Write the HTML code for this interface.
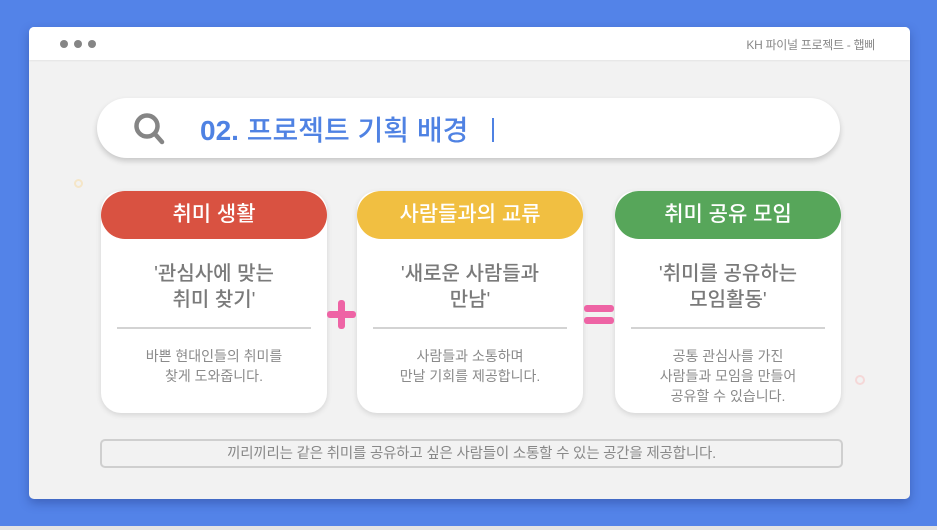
<!DOCTYPE html>
<html><head><meta charset="utf-8"><style>
*{margin:0;padding:0;box-sizing:border-box}
body{width:937px;height:530px;overflow:hidden;background:#5383e8;font-family:"Liberation Sans","Noto Sans CJK KR",sans-serif;position:relative}
.strip{position:absolute;left:0;top:526px;width:937px;height:4px;background:#e4e4e4}
.win{position:absolute;left:29px;top:27px;width:881px;height:472px;background:#f2f2f2;border-radius:5px;overflow:hidden;box-shadow:0 4px 10px rgba(30,50,120,.4)}
.hdr{position:absolute;left:0;top:0;width:100%;height:33px;background:#fff;box-shadow:0 1px 2px rgba(0,0,0,.06)}
.dot{position:absolute;top:13px;width:8px;height:8px;border-radius:50%;background:#858585}
.ht{position:absolute;right:35px;top:9px;font-size:12px;color:#888;letter-spacing:-0.3px}
.search{position:absolute;left:68px;top:71px;width:743px;height:60px;background:#fff;border-radius:30px;box-shadow:0 3px 6px rgba(0,0,0,.18)}
.title{position:absolute;left:103px;top:11px;font-size:28px;font-weight:500;color:#4f82e3;letter-spacing:0px}
.cur{position:absolute;left:395px;top:20px;width:2px;height:24px;background:#4f82e3}
.card{position:absolute;top:164px;width:226px;height:222px;background:#fff;border-radius:20px;box-shadow:0 2px 6px rgba(0,0,0,.12)}
.pill{position:absolute;left:0;top:0;width:100%;height:48px;border-radius:24px;color:#fff;font-size:21px;font-weight:500;text-align:center;line-height:48px}
.big{position:absolute;left:0;top:70px;width:100%;text-align:center;font-size:20px;font-weight:500;color:#7a7a7a;line-height:26px}
.line{position:absolute;left:16px;right:16px;top:136px;height:2px;background:#d3d3d3}
.small{position:absolute;left:0;top:155px;width:100%;text-align:center;font-size:14px;color:#8a8a8a;line-height:20px}
.bottom{position:absolute;left:71px;top:412px;width:743px;height:29px;border:2px solid #cfcfcf;border-radius:5px;text-align:center;font-size:14.5px;color:#888;line-height:26px;letter-spacing:-0.2px}
.pl{position:absolute;background:#ee64a5;border-radius:3px}
</style></head><body>
<div class="strip"></div>
<div class="win">
 <div class="hdr">
  <div class="dot" style="left:31px"></div><div class="dot" style="left:45px"></div><div class="dot" style="left:59px"></div>
  <div class="ht">KH 파이널 프로젝트 - 햅삐</div>
 </div>
 <div style="position:absolute;left:45px;top:152px;width:9px;height:9px;border:2px solid #f5e6c8;border-radius:50%"></div>
 <div style="position:absolute;left:826px;top:348px;width:10px;height:10px;border:2px solid #f5d8d8;border-radius:50%"></div>
 <div class="search">
  <svg style="position:absolute;left:36px;top:14px" width="36" height="36" viewBox="0 0 36 36"><circle cx="14" cy="14" r="10.5" fill="none" stroke="#858585" stroke-width="4.5"/><line x1="22" y1="22" x2="29" y2="30" stroke="#858585" stroke-width="4.5" stroke-linecap="round"/></svg>
  <div class="title"><b>02.</b> 프로젝트 기획 배경</div>
  <div class="cur"></div>
 </div>
 <div class="card" style="left:72px"><div class="pill" style="background:#d95241">취미 생활</div>
  <div class="big">'관심사에 맞는<br>취미 찾기'</div><div class="line"></div>
  <div class="small">바쁜 현대인들의 취미를<br>찾게 도와줍니다.</div></div>
 <div class="card" style="left:328px"><div class="pill" style="background:#f1bf41">사람들과의 교류</div>
  <div class="big">'새로운 사람들과<br>만남'</div><div class="line"></div>
  <div class="small">사람들과 소통하며<br>만날 기회를 제공합니다.</div></div>
 <div class="card" style="left:586px"><div class="pill" style="background:#57a65a">취미 공유 모임</div>
  <div class="big">'취미를 공유하는<br>모임활동'</div><div class="line"></div>
  <div class="small">공통 관심사를 가진<br>사람들과 모임을 만들어<br>공유할 수 있습니다.</div></div>
 <div class="pl" style="left:298px;top:284px;width:29px;height:7px"></div>
 <div class="pl" style="left:309px;top:273px;width:7px;height:29px"></div>
 <div class="pl" style="left:555px;top:278px;width:30px;height:7px"></div>
 <div class="pl" style="left:555px;top:290px;width:30px;height:7px"></div>
 <div class="bottom">끼리끼리는 같은 취미를 공유하고 싶은 사람들이 소통할 수 있는 공간을 제공합니다.</div>
</div>
</body></html>
